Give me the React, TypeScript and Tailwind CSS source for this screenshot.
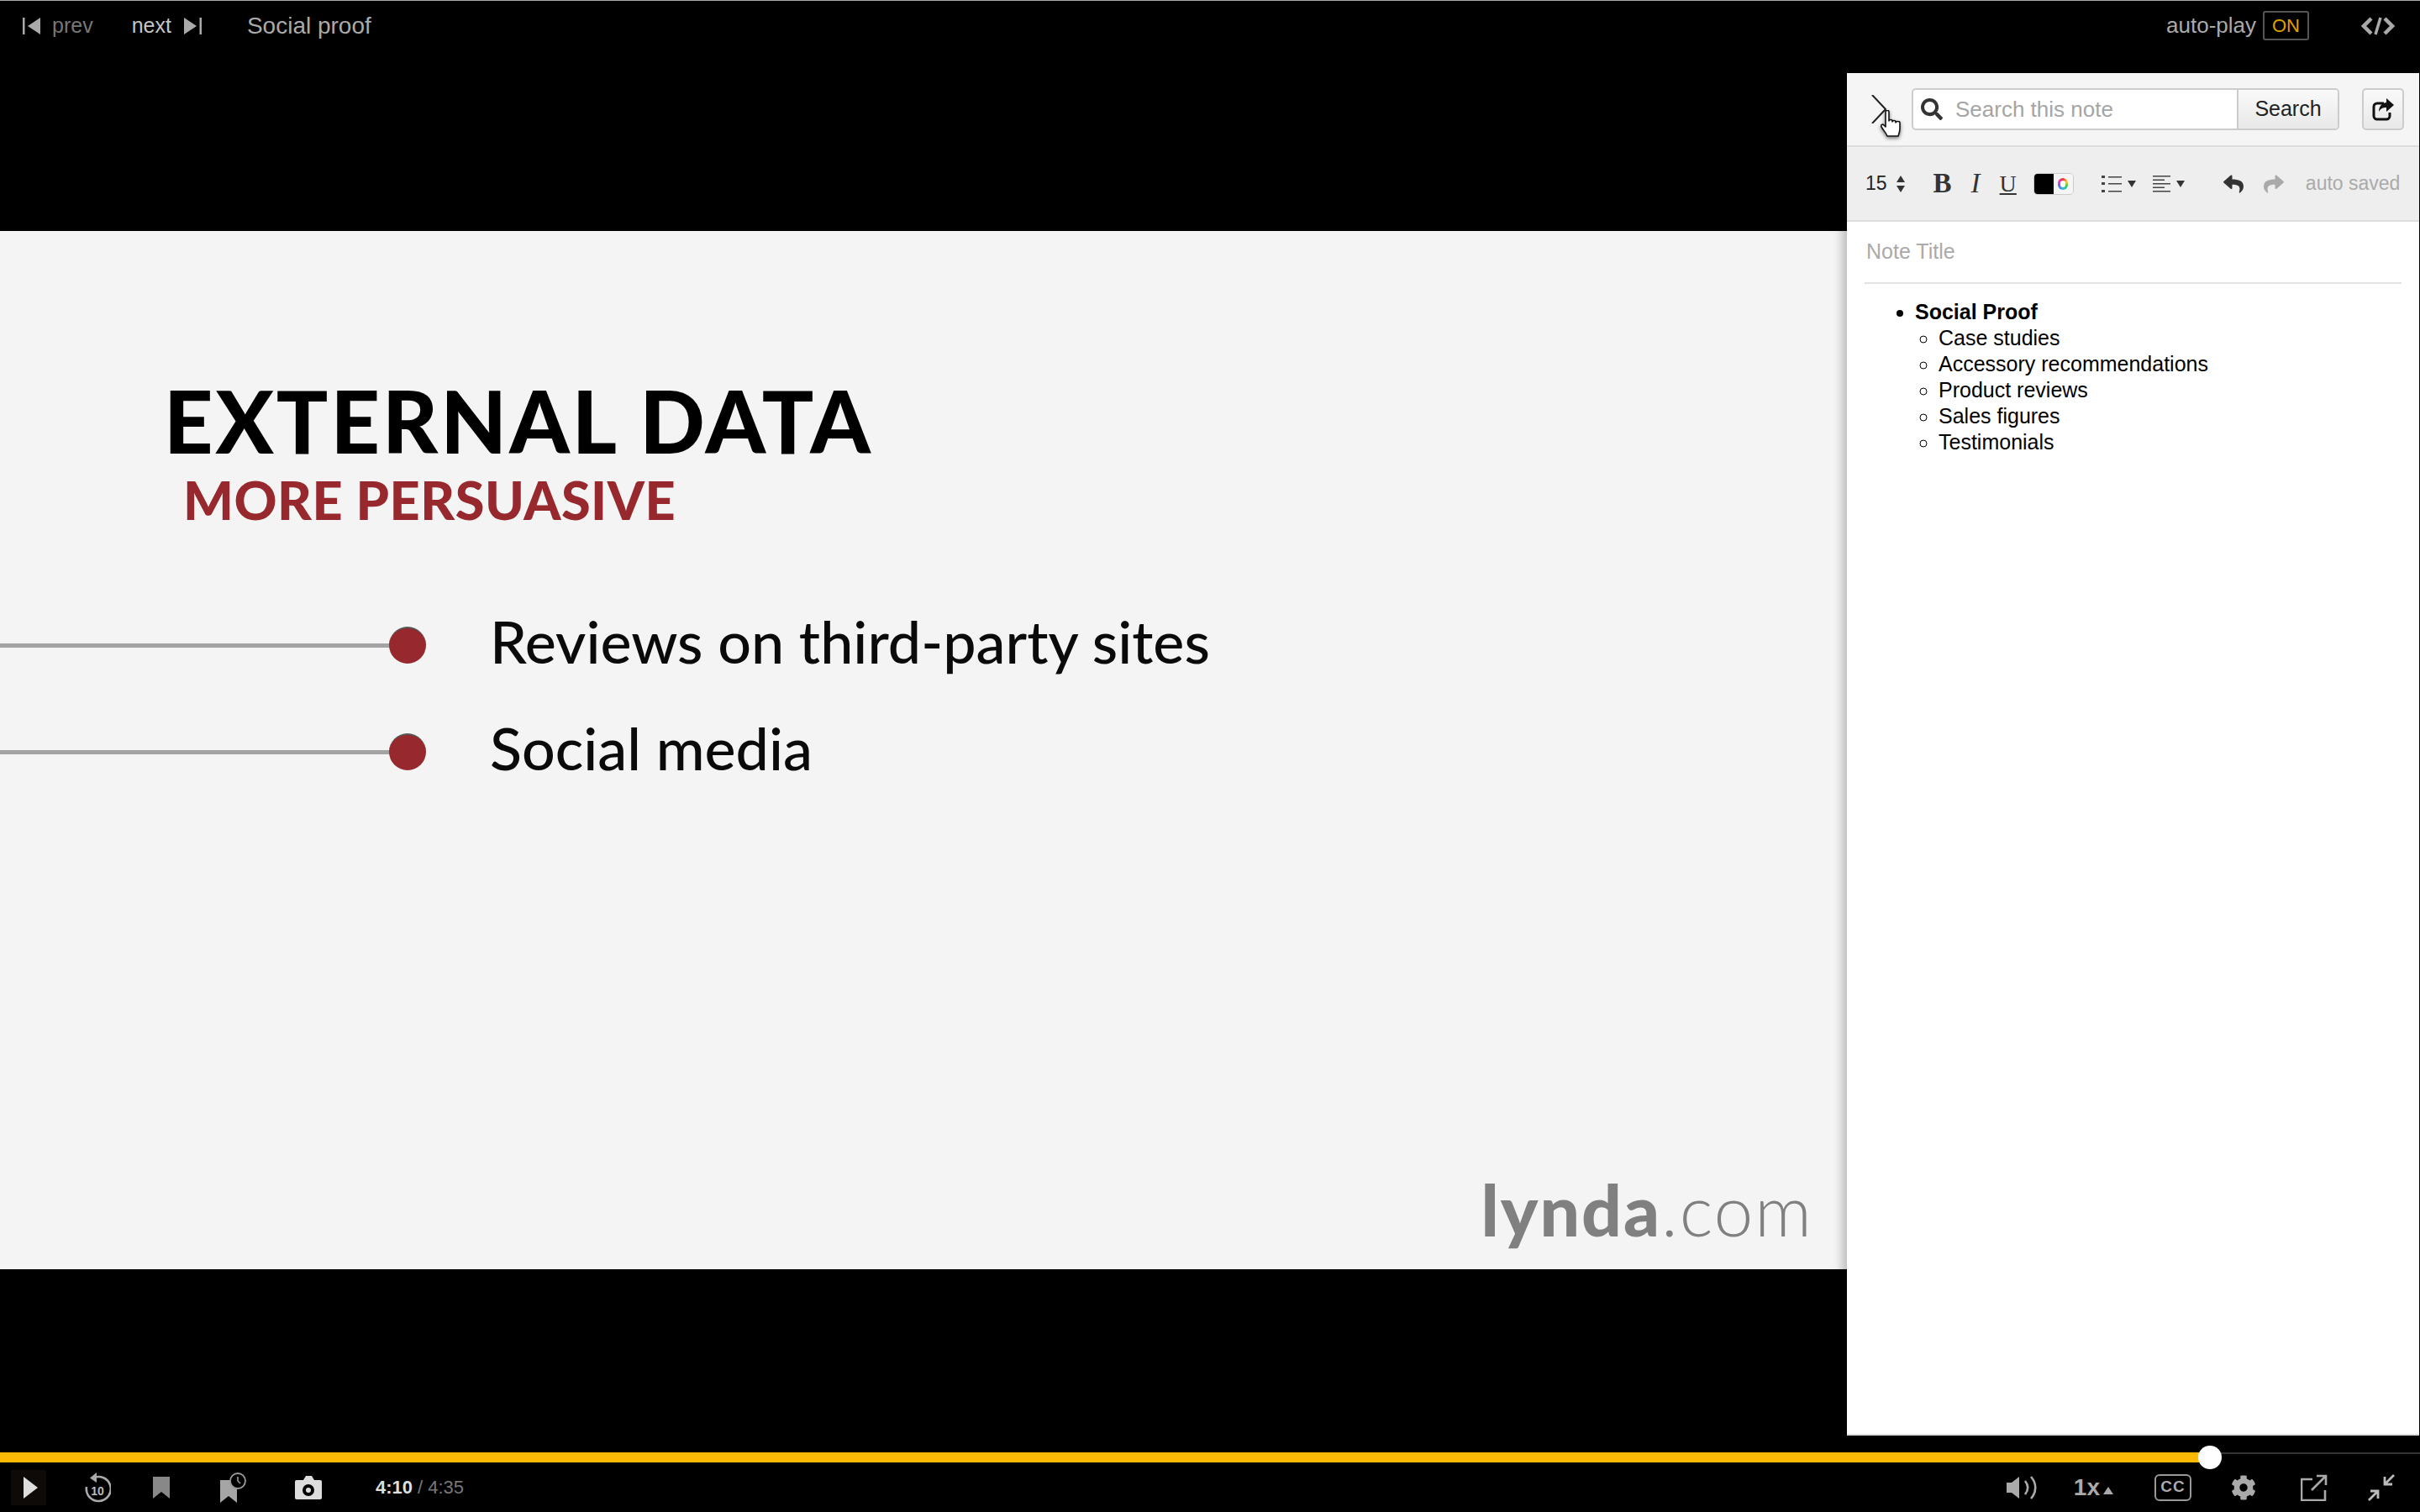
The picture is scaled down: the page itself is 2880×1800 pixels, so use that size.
import { FaCog, FaReply, FaSearch, FaShare } from "react-icons/fa";

const NOTE_ITEMS = [
  "Case studies",
  "Accessory recommendations",
  "Product reviews",
  "Sales figures",
  "Testimonials",
];

function SkipIcon({ flip, className }: { flip?: boolean; className?: string }) {
  return (
    <svg viewBox="0 0 21 20" className={className} fill="currentColor">
      <g transform={flip ? "matrix(-1 0 0 1 21 0)" : undefined}>
        <rect x="0" y="0" width="2.5" height="20" />
        <path d="M21 0v20L6 10z" />
      </g>
    </svg>
  );
}

function ListIcon() {
  return (
    <svg viewBox="0 0 24 24" className="h-[24px] w-[24px] text-[#444]" fill="currentColor">
      <rect x="0" y="2" width="4" height="3" />
      <rect x="0" y="10" width="4" height="3" />
      <rect x="0" y="19" width="4" height="3" />
      <rect x="8" y="3" width="16" height="1.5" />
      <rect x="8" y="11" width="16" height="1.5" />
      <rect x="8" y="20" width="16" height="1.5" />
    </svg>
  );
}

function AlignIcon() {
  return (
    <svg viewBox="0 0 22 24" className="h-[24px] w-[22px] text-[#444]" fill="currentColor">
      <rect x="0" y="2" width="21" height="1.5" />
      <rect x="0" y="6.5" width="14" height="1.5" />
      <rect x="0" y="11" width="21" height="1.5" />
      <rect x="0" y="15.5" width="14" height="1.5" />
      <rect x="0" y="20" width="21" height="1.5" />
    </svg>
  );
}

function Caret() {
  return <div className="h-0 w-0 border-x-[5px] border-t-[8px] border-x-transparent border-t-[#333]" />;
}

function BulletRow({ label, mt }: { label: string; mt: string }) {
  return (
    <div className={`flex h-[80px] items-center ${mt}`}>
      <div className="h-[5px] w-[465px] bg-[#a3a3a3]" />
      <div className="-ml-[2px] h-[44px] w-[44px] rounded-full border-t-2 border-[#555] bg-[#96282e]" />
      <span className="ml-[76px] pb-[9px] font-['Lato',sans-serif] text-[70px] leading-[71px] font-medium text-[#0a0a0a]">
        {label}
      </span>
    </div>
  );
}

export default function App() {
  return (
    <div className="flex h-[1800px] w-[2880px] flex-col overflow-hidden bg-black font-['Liberation_Sans',Arial,sans-serif]">
      {/* Top bar */}
      <div className="flex h-[87px] shrink-0 border-t border-[#aaa] pb-[27px] pl-[27px] pr-[30px]">
        <div className="flex items-center text-[#777]">
          <SkipIcon className="h-[20px] w-[21px] text-[#aaa]" />
          <span className="ml-[14px] text-[25px]">prev</span>
        </div>
        <div className="ml-[46px] flex items-center text-[#c4c4c4]">
          <span className="text-[25px]">next</span>
          <SkipIcon flip className="ml-[15px] h-[20px] w-[21px] text-[#aaa]" />
        </div>
        <div className="ml-[54px] flex items-center text-[28px] text-[#aaa]">Social proof</div>
        <div className="ml-auto flex items-center text-[26px] text-[#aaa]">auto-play</div>
        <div className="ml-[8px] mt-[12px] flex h-[35px] w-[55px] items-center justify-center rounded-[3px] border-2 border-[#555] text-[22px] text-[#e0a000]">
          ON
        </div>
        <div className="ml-[62px] flex items-center">
          <svg viewBox="0 0 40 22" className="h-[22px] w-[40px]" fill="none" stroke="#aaa" strokeWidth="4.5">
            <path d="M12 2 3 11l9 9M28 2l9 9-9 9" />
            <path d="M23 1l-6 20" strokeWidth="3.5" />
          </svg>
        </div>
      </div>

      {/* Video and notes */}
      <div className="flex h-[1622px] shrink-0">
        <div className="w-[2198px] shrink-0 pt-[188px]">
          <div className="flex h-[1236px] flex-col bg-[#f4f4f4] pt-[178px]">
            <div className="pl-[195px] font-['Lato',sans-serif] text-[102px] leading-[96px] font-black tracking-[3px] text-black">
              EXTERNAL DATA
            </div>
            <div className="mt-[10px] pl-[218px] font-['Lato',sans-serif] text-[63px] leading-[72px] font-black tracking-[0.5px] text-[#96282e]">
              MORE PERSUASIVE
            </div>
            <BulletRow label="Reviews on third-party sites" mt="mt-[97px]" />
            <BulletRow label="Social media" mt="mt-[47px]" />
            <div className="mt-auto mb-[23px] self-end pr-[40px] font-['Lato',sans-serif] text-[84px] leading-[96px] tracking-[2px] text-[#808080]">
              <span className="font-black">lynda</span>
              <span className="font-light">.com</span>
            </div>
          </div>
        </div>

        <div className="relative z-10 flex w-[681px] shrink-0 flex-col border-b-2 border-[#ddd] bg-white shadow-[-6px_0_10px_rgba(0,0,0,0.22)]">
          <div className="relative flex h-[88px] shrink-0 items-center border-b-2 border-[#ddd] bg-[#f5f5f5] pr-[18px]">
            <svg viewBox="0 0 18 34" className="ml-[29px] h-[34px] w-[18px]" fill="none" stroke="#222" strokeWidth="2">
              <path d="M1 0l16 17L1 34" />
            </svg>
            <div className="ml-[30px] flex h-[50px] w-[509px] overflow-hidden rounded-[5px] border-2 border-[#ccc] bg-white">
              <div className="flex flex-1 items-center pl-[9px] text-[26px] text-[#a5a5a5]">
                <FaSearch className="h-[26px] w-[26px] text-[#333]" />
                <span className="ml-[15px]">Search this note</span>
              </div>
              <div className="flex w-[120px] items-center justify-center border-l-2 border-[#ccc] bg-gradient-to-b from-[#fafafa] to-[#e8e8e8] text-[25px] text-[#222]">
                Search
              </div>
            </div>
            <div className="ml-auto flex h-[50px] w-[50px] items-center justify-center rounded-[5px] border-2 border-[#ccc] bg-gradient-to-b from-[#fafafa] to-[#e8e8e8]">
              <svg viewBox="0 0 26 28" className="h-[28px] w-[26px]" fill="none">
                <path d="M14 7H6a4 4 0 0 0-4 4v11a4 4 0 0 0 4 4h11a4 4 0 0 0 4-4v-4" stroke="#111" strokeWidth="3" />
                <path d="M17 1l9 8-9 8v-5c-4 0-7 1-9 5 0-6 3-10 9-11z" fill="#111" />
              </svg>
            </div>
            {/* hand cursor on top of the close chevron */}
            <svg viewBox="0 0 26 34" className="absolute left-[40px] top-[44px] h-[34px] w-[26px] drop-shadow-[0_2px_2px_rgba(0,0,0,0.5)]">
              <path
                d="M6 2c0-2 4-2 4 0v11c0-2 4-2 4 0v1c0-2 4-2 4 0v1c0-2 5-2 5 0v7c0 4-1 6-2 9H8c-1-3-4-6-7-11-1-2 1-4 3-2l2 2z"
                fill="#fff"
                stroke="#111"
                strokeWidth="1.6"
                strokeLinejoin="round"
              />
            </svg>
          </div>

          <div className="flex h-[89px] shrink-0 items-center border-b-2 border-[#ddd] bg-[#eee] text-[#333]">
            <span className="ml-[22px] text-[23px] text-[#222]">15</span>
            <div className="ml-[11px] flex flex-col gap-[4px]">
              <div className="h-0 w-0 border-x-[5px] border-b-[8px] border-x-transparent border-b-[#333]" />
              <div className="h-0 w-0 border-x-[5px] border-t-[8px] border-x-transparent border-t-[#333]" />
            </div>
            <span className="ml-[34px] font-['Liberation_Serif',serif] text-[33px] leading-none font-bold">B</span>
            <span className="ml-[23px] font-['Liberation_Serif',serif] text-[33px] leading-none italic">I</span>
            <span className="ml-[23px] font-['Liberation_Serif',serif] text-[28px] leading-none underline">U</span>
            <div className="ml-[20px] flex h-[26px] w-[48px] overflow-hidden rounded-[5px] border border-[#ccc]">
              <div className="w-[23px] bg-black" />
              <div className="flex flex-1 items-center justify-center bg-[#f5f5f5]">
                <div className="h-[14px] w-[12px] rounded-full bg-[conic-gradient(#e33,#fc3,#3c5,#3bd,#66e,#e3c,#e33)] p-[3px]">
                  <div className="h-full w-full rounded-full bg-white" />
                </div>
              </div>
            </div>
            <div className="ml-[33px]">
              <ListIcon />
            </div>
            <div className="ml-[7px]">
              <Caret />
            </div>
            <div className="ml-[20px]">
              <AlignIcon />
            </div>
            <div className="ml-[6px]">
              <Caret />
            </div>
            <FaReply className="ml-[45px] h-[24px] w-[26px] text-[#333]" />
            <FaShare className="ml-[22px] h-[24px] w-[26px] text-[#aaa]" />
            <span className="ml-[25px] text-[23px] text-[#aaa]">auto saved</span>
          </div>

          <div className="mx-[21px] flex h-[74px] shrink-0 items-center border-b-2 border-[#e2e2e2] pl-[2px] text-[25px] text-[#aaa]">
            Note Title
          </div>

          <ul className="mt-[18px] list-disc pl-[81px] text-[25px] leading-[31px] text-black">
            <li className="font-bold">
              Social Proof
              <ul className="list-[circle] pl-[28px] font-normal">
                {NOTE_ITEMS.map((item) => (
                  <li key={item}>{item}</li>
                ))}
              </ul>
            </li>
          </ul>
        </div>
      </div>

      {/* Player controls */}
      <div className="flex flex-1 flex-col">
        <div className="relative mt-[20px] flex h-[12px] shrink-0 items-start">
          <div className="h-[12px] w-[2630px] bg-[#ffb900]" />
          <div className="h-[2px] flex-1 bg-[#333]" />
          <div className="absolute left-[2616px] -top-[8px] h-[28px] w-[28px] rounded-full bg-white" />
        </div>
        <div className="flex flex-1 items-center pr-[30px]">
          <div className="ml-[13px] flex h-[42px] w-[42px] items-center bg-[#0d0a08] pl-[15px]">
            <svg viewBox="0 0 17 26" className="h-[26px] w-[17px]" fill="#ddd">
              <path d="M0 0l17 13L0 26z" />
            </svg>
          </div>
          <svg viewBox="0 0 32 36" className="ml-[45px] h-[36px] w-[32px]" fill="none" stroke="#aaa" strokeWidth="2.6">
            <path d="M10 7a14.5 14.5 0 1 1-7 10" />
            <path d="M15 0 7 6.5l8 5.5z" fill="#aaa" stroke="none" />
            <text x="16" y="27" textAnchor="middle" fontSize="14" fontWeight="700" fill="#bbb" stroke="none" fontFamily="Liberation Sans">
              10
            </text>
          </svg>
          <svg viewBox="0 0 20 26" className="ml-[50px] h-[26px] w-[20px]" fill="#888">
            <path d="M0 0h20v26l-10-8-10 8z" />
          </svg>
          <svg viewBox="0 0 32 36" className="ml-[60px] h-[36px] w-[32px]">
            <path d="M0 9h20v27l-10-8-10 8z" fill="#a5a5a5" />
            <circle cx="21" cy="10" r="9" fill="#000" stroke="#999" strokeWidth="1.8" />
            <path d="M21 5v5l3 3" fill="none" stroke="#999" strokeWidth="1.6" />
          </svg>
          <svg viewBox="0 0 32 28" className="ml-[57px] h-[28px] w-[32px]" fill="#ddd">
            <path fillRule="evenodd" d="M2 5h8l3-5h7l3 5h7a2 2 0 0 1 2 2v19a2 2 0 0 1-2 2H2a2 2 0 0 1-2-2V7a2 2 0 0 1 2-2zm14 5a7 7 0 1 0 0 14 7 7 0 0 0 0-14zm0 4a3 3 0 1 1 0 6 3 3 0 0 1 0-6z" />
          </svg>
          <span className="ml-[64px] text-[22px] font-bold text-[#ddd]">4:10</span>
          <span className="ml-[6px] text-[22px] text-[#777]">/ 4:35</span>

          <svg viewBox="0 0 40 30" className="ml-auto mr-[-4px] h-[30px] w-[40px]" fill="none" stroke="#aaa" strokeWidth="2.6">
            <path d="M0 9h6l9-7v26l-9-7H0z" fill="#aaa" stroke="none" />
            <path d="M22 7c4 5 4 11 0 16M29 2c7 8 7 18 0 26" />
          </svg>
          <span className="ml-[44px] text-[28px] font-bold text-[#aaa]">1x</span>
          <div className="ml-[4px] mt-[8px] h-0 w-0 border-x-[6px] border-b-[9px] border-x-transparent border-b-[#aaa]" />
          <div className="ml-[49px] flex h-[32px] w-[44px] items-center justify-center rounded-[6px] border-2 border-[#999] text-[19px] font-bold tracking-[1px] text-[#aaa]">
            CC
          </div>
          <FaCog className="ml-[47px] h-[30px] w-[30px] text-[#aaa]" />
          <svg viewBox="0 0 32 32" className="ml-[53px] h-[32px] w-[32px]" fill="none" stroke="#aaa" strokeWidth="2.6">
            <path d="M14 6H1v25h28V19" />
            <path d="M13 19 30 2M19 2h11v11" />
          </svg>
          <svg viewBox="0 0 32 32" className="ml-[48px] h-[32px] w-[32px]" fill="none" stroke="#bbb" strokeWidth="2.8">
            <path d="M31 1 20 12M20 3v9h9M1 31l11-11M3 20h9v9" />
          </svg>
        </div>
      </div>
    </div>
  );
}
